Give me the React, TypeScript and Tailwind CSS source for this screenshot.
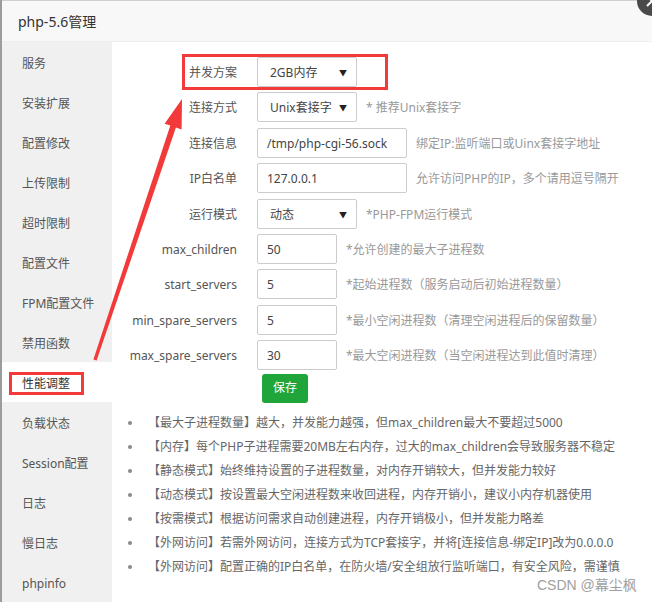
import React from "react";

const FONT = { fontFamily: '"Noto Sans", "Noto Sans CJK SC", sans-serif' };

type Row = {
  label: string;
  kind: "select" | "input";
  value: string;
  w: string;
  hint?: string;
};

const rows: Row[] = [
  { label: "并发方案", kind: "select", value: "2GB内存", w: "w-[100px]" },
  { label: "连接方式", kind: "select", value: "Unix套接字", w: "w-[100px]", hint: "* 推荐Unix套接字" },
  { label: "连接信息", kind: "input", value: "/tmp/php-cgi-56.sock", w: "w-[150px]", hint: "绑定IP:监听端口或Uinx套接字地址" },
  { label: "IP白名单", kind: "input", value: "127.0.0.1", w: "w-[150px]", hint: "允许访问PHP的IP，多个请用逗号隔开" },
  { label: "运行模式", kind: "select", value: "动态", w: "w-[100px]", hint: "*PHP-FPM运行模式" },
  { label: "max_children", kind: "input", value: "50", w: "w-[80px]", hint: "*允许创建的最大子进程数" },
  { label: "start_servers", kind: "input", value: "5", w: "w-[80px]", hint: "*起始进程数（服务启动后初始进程数量）" },
  { label: "min_spare_servers", kind: "input", value: "5", w: "w-[80px]", hint: "*最小空闲进程数（清理空闲进程后的保留数量）" },
  { label: "max_spare_servers", kind: "input", value: "30", w: "w-[80px]", hint: "*最大空闲进程数（当空闲进程达到此值时清理）" },
];

const menu = [
  "服务",
  "安装扩展",
  "配置修改",
  "上传限制",
  "超时限制",
  "配置文件",
  "FPM配置文件",
  "禁用函数",
  "性能调整",
  "负载状态",
  "Session配置",
  "日志",
  "慢日志",
  "phpinfo",
];

const tips = [
  "【最大子进程数量】越大，并发能力越强，但max_children最大不要超过5000",
  "【内存】每个PHP子进程需要20MB左右内存，过大的max_children会导致服务器不稳定",
  "【静态模式】始终维持设置的子进程数量，对内存开销较大，但并发能力较好",
  "【动态模式】按设置最大空闲进程数来收回进程，内存开销小，建议小内存机器使用",
  "【按需模式】根据访问需求自动创建进程，内存开销极小，但并发能力略差",
  "【外网访问】若需外网访问，连接方式为TCP套接字，并将[连接信息-绑定IP]改为0.0.0.0",
  "【外网访问】配置正确的IP白名单，在防火墙/安全组放行监听端口，有安全风险，需谨慎",
];

export default function App() {
  return (
    <div className="relative w-[652px] h-[602px] overflow-hidden bg-white flex" style={FONT}>
      {/* page behind dialog */}
      <div className="w-[2px] h-full bg-[#9c9c9c] shrink-0" />
      <div className="flex-1 flex flex-col border-t border-[#cfcfcf]">
        {/* title */}
        <div className="h-[42px] bg-[#f8f8f8] border-b border-[#eeeeee] flex items-center pl-[16px] text-[14px] text-[#333]">
          php-5.6管理
        </div>
        <div className="flex flex-1">
          {/* sidebar */}
          <div className="w-[110px] bg-[#f0f0f0] shrink-0">
            {menu.map((m) => (
              <div
                key={m}
                className={
                  m === "性能调整"
                    ? "h-[40px] flex items-center pt-[4px] pl-[20px] text-[12px] text-[#333] bg-white"
                    : "h-[40px] flex items-center pt-[4px] pl-[20px] text-[12px] text-[#555]"
                }
              >
                {m}
              </div>
            ))}
          </div>
          {/* main */}
          <div className="flex-1 pt-[15px]">
            {rows.map((r) => (
              <div key={r.label} className="flex items-center h-[30px] mb-[5.4px]">
                <div className="w-[125px] text-right text-[12px] text-[#555] pt-[2px] whitespace-nowrap">{r.label}</div>
                <div
                  className={`${r.w} ml-[20px] h-[30px] border border-[#cccccc] rounded-[2px] flex items-center pt-[2px] text-[12px] text-[#444] whitespace-nowrap ${
                    r.kind === "select" ? "pl-[12px] pr-[9px] justify-between" : "pl-[9px]"
                  }`}
                >
                  <span>{r.value}</span>
                  {r.kind === "select" && <span className="text-[8px] text-[#222]">▼</span>}
                </div>
                {r.hint && (
                  <div className="ml-[9px] pt-[2px] text-[12px] text-[#999] whitespace-nowrap">{r.hint}</div>
                )}
              </div>
            ))}
            <div className="pl-[150px] mt-[-2px]">
              <button className="w-[46px] h-[29px] bg-[#20a53a] rounded-[3px] text-white text-[12px] flex items-center justify-center">
                保存
              </button>
            </div>
            <div className="mt-[7px] pl-[16px]">
              {tips.map((t) => (
                <div key={t} className="h-[24px] flex items-center pt-[2px] text-[12px] text-[#666] whitespace-nowrap">
                  <span className="w-[4px] h-[4px] rounded-full bg-[#8a8a8a] shrink-0 mr-[16px]" />
                  <span>{t}</span>
                </div>
              ))}
            </div>
          </div>
        </div>
      </div>

      {/* annotations */}
      <div className="absolute left-[182px] top-[54px] w-[206px] h-[36px] border-[3px] border-[#f23a3a]" />
      <div className="absolute left-[9px] top-[372px] w-[75px] h-[23px] border-[3px] border-[#f23a3a]" />
      <svg className="absolute left-0 top-0" width="652" height="602" viewBox="0 0 652 602">
        <polygon
          points="182,99 181.6,129.5 175.9,127.6 96.6,360.5 93.4,359.5 170.3,125.6 164.6,123.7"
          fill="#f23a3a"
        />
      </svg>
      {/* close button */}
      <div className="absolute left-[637px] top-[-14px] w-[30px] h-[30px] rounded-full bg-[#4a4a4a] flex items-center justify-center">
        <svg width="14" height="14" viewBox="0 0 14 14">
          <path d="M2 2 L12 12 M12 2 L2 12" stroke="#fff" strokeWidth="2" />
        </svg>
      </div>
      {/* watermark */}
      <div
        className="absolute left-[537px] top-[575px] text-[14px] text-[#a0a0a0] whitespace-nowrap"
        style={{ fontFamily: '"Liberation Sans", "Noto Sans CJK SC", sans-serif' }}
      >
        CSDN @幕尘枫
      </div>
    </div>
  );
}
